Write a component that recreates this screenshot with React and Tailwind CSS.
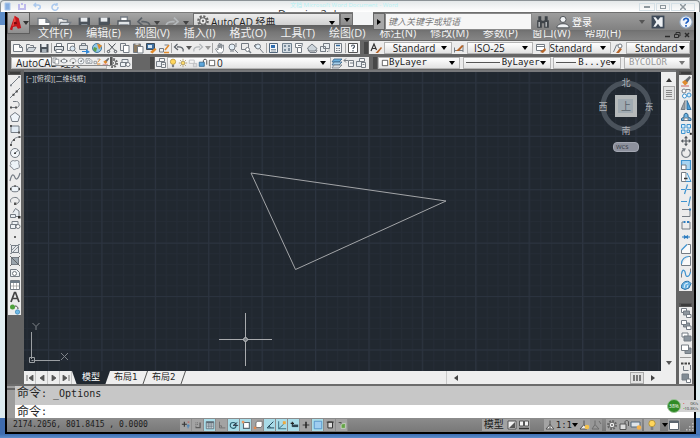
import clsx from "clsx"

const LATIN = "font-['Open_Sans','Noto_Sans_CJK_SC',sans-serif]"
const MONO = "font-['DejaVu_Sans_Mono','Noto_Sans_CJK_SC',monospace]"

const G = "#757c84"
const B = "#3f93cf"
const O = "#e08a2c"

// Every icon is drawn on a 12x12 grid
const icons = {
  // file
  new: <path d="M1.500 2.500h6l3 3v4h-9zM7.500 2.500v3h3" fill="#fdfdfd" stroke={G} />,
  open: <><path d="M1.500 9.500v-7h3l1 1h3v2" fill="#eee" stroke={G} /><path d="M1.500 9.500l2-4h7.500l-2.500 4z" fill="#cfd6dc" stroke={G} /></>,
  save: <><path d="M2 2h8.500v8.500H2z" fill="#4c535b" /><path d="M3.500 2h5v3h-5z" fill="#e8ebee" /><path d="M4 7h4.500v3.500H4z" fill="#a7b0b8" /></>,
  saveAs: <><path d="M2 2h8.500v8.500H2z" fill="#4c535b" /><path d="M3.500 2h5v3h-5z" fill="#e8ebee" /><path d="M6.500 11l4-4 1 1-4 4z" fill={O} /></>,
  print: <><path d="M3.500 1.500h5v3h-5z" fill="#fff" stroke={G} /><path d="M1.500 4.500h9v4h-9z" fill="#dfe3e6" stroke="#4f565e" /><path d="M3 7.500h6v3H3z" fill="#fff" stroke={G} /></>,
  preview: <><path d="M1.500 1.500h7v7h-7z" fill="#fafafa" stroke={G} /><circle cx="6.500" cy="6.500" r="2.500" fill="#dbe9f4" stroke={G} /><path d="M8.500 8.500l2.500 2.500" stroke={G} /></>,
  publish: <><path d="M3.500 1.500h4v2h-4zM1.500 3.500h8v4h-8z" fill="#dfe3e6" stroke={G} /><path d="M4 9h4V7l4 3-4 2v-2H4z" fill="#2f86d6" /></>,
  globe: <><circle cx="6" cy="6" r="4.500" fill="#8fc8e8" stroke="#4678a0" /><path d="M6 1.500l5 2-3 4z" fill={O} /><path d="M3 5l3 1-1 4-3-2z" fill="#5da04c" /></>,
  cut: <><path d="M2.500 1.500l6.500 7M9.500 1.500L3 8.500" stroke="#4a4f55" /><circle cx="2.500" cy="9.500" r="1.200" stroke="#4a4f55" fill="none" /><circle cx="9.500" cy="9.500" r="1.200" stroke="#4a4f55" fill="none" /></>,
  copyClip: <><path d="M1.500 1.500h5v7h-5z" fill="#eee" stroke={G} /><path d="M4.500 3.500h5.500v7H4.500z" fill="#fff" stroke={G} /></>,
  paste: <><path d="M1.500 2h7v8.500h-7z" fill="#8f7d64" stroke={G} /><path d="M3.500 1h3v2h-3z" fill="#ccc" /><path d="M5.500 4.500H11v6.500H5.500z" fill="#fff" stroke={G} /></>,
  match: <><path d="M1.500 1.500h8v6h-8z" fill="#3d6f9f" stroke="#3f4b57" /><path d="M3 3h4v3H3z" fill="#d7e6f2" /><path d="M5 10l5-4 1.500 1.500-4 4z" fill={O} /></>,
  blockEdit: <><path d="M1.500 6.500h4v3.500h-4zM6.500 3h4" fill="#eee" stroke={G} /><path d="M7 8l4-5M6 10.500h5" stroke={O} strokeWidth="1.500" /></>,
  undo: <path d="M10 9.500c1-3-1-5-6-4.500M4.500 2L1.500 5l3.500 3" fill="none" stroke="#5b6168" strokeWidth="1.300" />,
  redo: <path d="M2 9.500C1 6.500 3 4.500 8 5M7.500 2l3 3L7 8" fill="none" stroke="#b4b8bb" strokeWidth="1.300" />,
  pan: <path d="M4 11L1.500 7l1-.5L4 8V3h1v3-4.500h1V6l.5-4h1v4.500L8.500 3h1v5.500L8 11z" fill="#fff" stroke={G} strokeWidth=".8" />,
  zoomRt: <><circle cx="5" cy="5" r="3" fill="#e3eef6" stroke={G} /><path d="M7.500 7.500L11 11M9 1v4M7 9h-4" stroke={G} /></>,
  zoomWin: <><path d="M1.500 1.500h7v6h-7z" fill="none" stroke={G} /><circle cx="7.500" cy="7.500" r="2" fill="#fff" stroke={G} /><path d="M9 9l2 2" stroke={G} strokeWidth="1.500" /></>,
  zoomPrev: <><circle cx="5" cy="4.500" r="2.500" fill="#e3eef6" stroke={G} /><path d="M7 7l3.500 4M1 4l2-2M1 4l2 1.500" stroke={G} /></>,
  props: <><path d="M1.500 1.500h8v9h-8z" fill="#f4f6f8" stroke="#52677c" /><path d="M3 3h4v3H3z" fill="#2f6db0" /><path d="M3 7.500h5M3 9h5" stroke="#8a99a6" /></>,
  design: <><path d="M1.500 1.500h9v9h-9z" fill="#d5dde4" stroke="#71818f" /><path d="M3 3h2v2H3zM7 3h2v2H7zM3 7h2v2H3zM7 6h2v3H7z" fill="#7d8f9f" /></>,
  palette: <path d="M2.500 1.500h7l-1 4v5h-4v-5h-2zM5 3.500h3M5 5.500h3" fill="#fff" stroke={G} />,
  sheet: <><path d="M1.500 6L6 2l5 4.500L9 9H3z" fill="#cdd5db" stroke={G} /><path d="M2 8l2 2.500h6L11 8" fill="none" stroke={G} /></>,
  markup: <><path d="M4.500 1.500h6v5h-6zM1.500 4.500h5v5h-5z" fill="#e9edf0" stroke={G} /><path d="M4 9.500h6v-4" fill="none" stroke={G} strokeDasharray="1 1" /></>,
  calc: <><path d="M2.500 1.500h7v9h-7z" fill="#f4f4f4" stroke={G} /><path d="M4 3.500h4" stroke="#30689c" strokeWidth="1.500" /><path d="M4 6.500h4M4 8.500h4" stroke={G} strokeDasharray="1 .5" /></>,
  help: <><path d="M1.500 1.500h9v9h-9z" fill="#fff" stroke="#555" /><path d="M4.500 4.500c0-2 3-2 3 0 0 1-1.500 1-1.500 2.500M6 8v1.500" fill="none" stroke="#444f5e" strokeWidth="1.200" /></>,
  textStyle: <><path d="M1 9L4 2l2.500 6M2 6.500h3.500" fill="none" stroke="#333" strokeWidth="1.200" /><path d="M5.500 11L11 5l1 1-4 5z" fill="#b5652a" /></>,
  dimStyle: <><path d="M1 8.500h9M1.500 5.500v5M10 3v7" stroke={G} fill="none" /><path d="M3 9l6-6 1.500 1L6 9z" fill="#b5652a" /></>,
  tableStyle: <><path d="M1.500 2.500h8v6h-8zM1.500 4.500h8" fill="#fff" stroke={G} /><path d="M5 10l5-4 1 2-3 3z" fill="#b5652a" /></>,
  leaderStyle: <><path d="M1.500 10l3-7h4l1 2" fill="none" stroke={G} /><circle cx="8" cy="4" r="2" fill="#fff" stroke={G} /><path d="M4 11l4-5 2 1-3 4z" fill="#b5652a" /></>,
  // layers
  layers: <><path d="M1.500 4.500h5v5h-5z" fill="#e8ecef" stroke={G} /><path d="M4.500 1.500h5v3h-5zM6.500 5.500h4v5h-4zM7.500 7.500h2" fill="#f6f6f6" stroke={G} /></>,
  bulb: <><circle cx="6" cy="4.500" r="3.200" fill="#ffd65c" stroke="#a98a35" strokeWidth=".8" /><path d="M4.700 8h2.600v3H4.700z" fill="#7c7f84" /></>,
  sun: <><circle cx="6" cy="6" r="2.200" fill="#ffdc6b" stroke="#9a8240" strokeWidth=".8" /><path d="M6 1v2M6 9v2M1 6h2M9 6h2M2.500 2.500L4 4M8 8l1.500 1.500M9.500 2.500L8 4M4 8L2.500 9.500" stroke="#9a8240" strokeWidth=".8" /></>,
  vpFreeze: <><path d="M1.500 2.500h6v4h-6z" fill="none" stroke="#b9bcbf" /><path d="M6.500 6.500h4v4h-4z" fill="#ddd" stroke="#b9bcbf" /></>,
  lock: <><path d="M1.500 5h6v5h-6z" fill="#5da7dc" stroke="#34688f" /><path d="M6.500 5V3c0-2 4-2 4 0v5" fill="none" stroke="#555" strokeWidth="1.200" /></>,
  swatch: <path d="M2 2h8v8H2z" fill="#fff" stroke="#222" />,
  makeCurrent: <><path d="M3 2h8l-3 3H1z" fill="#6cb0dd" stroke="#3a668a" strokeWidth=".8" /><path d="M3 5h8l-3 3H1z" fill="#a6d0ec" stroke="#3a668a" strokeWidth=".8" /><path d="M3 8h8l-3 3H1z" fill="#d9dde0" stroke={G} strokeWidth=".8" /></>,
  layerPrev: <><path d="M5.500 3.500h5v6h-5z" fill="#f6f6f6" stroke={G} /><path d="M1 3.500h4M3 1.500L1 3.500l2 2M7 6h3" stroke={G} fill="none" /></>,
  // draw
  line: <><path d="M2 10L10 2" stroke={G} /><path d="M1 9.500h1.800v1.800H1zM9.300 1h1.800v1.800H9.300z" fill={G} /></>,
  xline: <><path d="M1 11L11 1" stroke={G} /><path d="M3.500 6.800h2v2h-2zM6.700 3.500h2v2h-2z" fill="#444" /></>,
  pline: <><path d="M4 2.500h3.500c3.500 0 3.500 6 0 6H2" fill="none" stroke={G} /><path d="M1 7.500h2v2H1zM6 7.500h2v2H6z" fill="#555" /></>,
  polygon: <path d="M6 1.500l4.700 3.500L9 10.500H3L1.300 5z" fill="#eef4f9" stroke={G} />,
  rect: <><path d="M2 3h8v6.500H2z" fill="#e1ebf4" stroke={G} /><path d="M1 2h2v2H1zM9 8.500h2v2H9z" fill="#555" /></>,
  arc: <><path d="M2 10C2.500 5 6 2.500 10 2" fill="none" stroke={G} /><path d="M1 9h2v2H1zM4 4h2v2H4zM9.500 1h2v2h-2z" fill="#555" /></>,
  circle: <><circle cx="6" cy="6" r="4.500" fill="#f2f6f9" stroke={G} /><path d="M6 6l3-2.500" stroke={G} /><path d="M5 5.500h2v1.500H5z" fill="#444" /></>,
  cloud: <path d="M3 2c1.500-1 2 0 3 0 1.500-1 4-.5 4 1 0 1-.5 1.500 0 2.500 1 2 0 4.500-2 4-1 0-2 1.500-3.500 1C3.500 10 4 9 3 8.500 1 8 .5 6.500 2 5.500 1 4 1.500 2.500 3 2z" fill="#edf3f8" stroke={G} strokeWidth=".9" />,
  spline: <path d="M1 10C3 1 5 4 6 6.500S9 9 11 2" fill="none" stroke={G} strokeWidth="1.200" />,
  ellipse: <><ellipse cx="6" cy="6" rx="4.300" ry="2.800" fill="#eef4f9" stroke={G} /><path d="M1 5h1.500v2H1zM9.500 5H11v2H9.500zM5.300 2.300h1.500v1.500H5.300z" fill="#444" /></>,
  ellArc: <><path d="M2 7.500C0 4 4 2 7 2.500s5 4.500 1 6" fill="none" stroke={G} /><path d="M5 7.500h2.500V10H5z" fill="#555" /></>,
  insert: <><path d="M1.500 7.500h5v3h-5zM4 5.500L6.500 1.500 10 4v5.500H6.500" fill="#e9eef2" stroke={G} /><path d="M9 9h2.500v2.500H9z" fill="#333" /></>,
  block: <><path d="M3 2.500h6v3H3zM1.500 5.500h5v4h-5z" fill="#eef2f5" stroke={G} /><circle cx="9" cy="7.500" r="2" fill="#fff" stroke={G} /></>,
  point: <path d="M5 5h2v2H5z" fill="#666" />,
  hatch: <><path d="M2.500 2.500h7v7h-7z" fill="#e3e6e9" stroke={G} /><path d="M1 1l2 2M9 9l2 2M3 7l4-4M4 9l5-5M1 10.500h2M9 1.500h2" stroke={G} strokeWidth=".8" /></>,
  gradient: <><path d="M2.500 2.500h7v7h-7z" fill="#9aa4ac" stroke={G} /><path d="M1 1l10 10M1 11l2-2M9 3l2-2" stroke="#555" strokeWidth=".8" /></>,
  region: <><path d="M1.500 2.500h6l3 3v4h-9z" fill="#eef2f5" stroke={G} /><circle cx="5.500" cy="6.500" r="2" fill="#fff" stroke={G} /></>,
  table: <><path d="M1.500 1.500h9v9h-9z" fill="#fff" stroke={G} /><path d="M1.500 2h9v2h-9z" fill="#6f7c88" /><path d="M4.500 4v6M7.500 4v6M2 7h8" stroke="#999" strokeWidth=".7" /></>,
  text: <path d="M2 11L5.500 1.500h1L10 11M3.500 7.500h5" fill="none" stroke="#444" strokeWidth="1.700" />,
  addSel: <><circle cx="3.500" cy="4" r="2.500" fill="#4fa13c" /><path d="M6 3c2 0 3 1 3 3" fill="none" stroke="#444" /><circle cx="8.500" cy="9" r="2.200" fill="#6fb9e6" stroke="#3a86b8" strokeWidth=".7" /></>,
  // modify
  erase: <><path d="M4 6l5.500-5L11 2.500 7 8z" fill="#6b6f73" /><path d="M2 7l3-2 3 3-3 2.500z" fill={O} /><path d="M1 11h8" stroke="#c66" /></>,
  copy: <><circle cx="4" cy="4" r="2" fill="#fff" stroke={G} /><circle cx="4.500" cy="9" r="2" fill="#fff" stroke={B} /><circle cx="9" cy="8" r="2" fill="#d7ecf9" stroke={B} /><path d="M6 2.500h4v2" fill="none" stroke={G} /></>,
  mirror: <><path d="M5 1.500v9H1z" fill="#9aa1a7" stroke={G} /><path d="M7 1.500v9h4z" fill="#4da0da" stroke="#2f6f9f" /></>,
  offset: <><path d="M1.500 9.500V7.500L4 6V3.500L6 2l2 1.500V6l3 1.500v2z" fill="#6db4e3" stroke="#30648c" /><path d="M4 9.500h4V7H4z" fill="#fff" stroke={G} /></>,
  array: <><path d="M1.500 1.500h3.500v3.500H1.500zM7 1.500h3.500v3.500H7zM1.500 7H5v3.500H1.500z" fill="#d7ecf9" stroke={B} /><path d="M7 7h2.500v2.500H7z" fill="#d7ecf9" stroke={B} /><path d="M9.800 9.800h2v2h-2z" fill="#222" /></>,
  move: <path d="M6 .8l2 2.400H6.600v2.200h2.200V4l2.400 2-2.400 2V6.600H6.600v2.200H8l-2 2.400-2-2.400h1.400V6.600H3.200V8L.8 6l2.400-2v1.400h2.200V3.200H4z" fill="#555b61" />,
  rotate: <><path d="M8.500 2.500A4.300 4.300 0 1 1 3.500 2.500" fill="none" stroke={G} strokeWidth="1.200" /><path d="M2 1l4 .5L4 5z" fill={G} /></>,
  scale: <><path d="M1.500 1.500h9v9h-9z" fill="#a8d4f1" stroke={B} strokeWidth="1.200" /><path d="M1.500 6h4.500v4.500H1.500z" fill="#fff" stroke={G} /></>,
  stretch: <><path d="M1.500 1.500H6v9H1.500z" fill="#fff" stroke={G} /><path d="M7 2l4 8.500H6" fill="#d7ecf9" stroke={B} /><path d="M4 7.500h3.500" stroke="#333" strokeWidth="1.500" /></>,
  trim: <path d="M1 6.500h4M7 6.500h4M7.500 1.500L4.500 11" stroke={B} strokeWidth="1.200" />,
  extend: <path d="M1 6.500h6M10.500 1.500L8.500 11" stroke={B} strokeWidth="1.200" />,
  breakAt: <><path d="M2 2.500h8M2 9.500h8" stroke={G} fill="none" /><path d="M10 3v6.500" stroke={G} /><path d="M9 1.500h2v2H9z" fill="#2c7cc0" /></>,
  break: <><path d="M3.500 3H2v7h8V3H8.500" fill="none" stroke={G} /><path d="M3.500 2h2v2h-2zM7 2h2v2H7z" fill="#2c7cc0" /></>,
  join: <path d="M2 6h8M4 4.500L6 6 4 7.500M8 4.500L6 6l2 1.500" stroke="#2c7cc0" fill="none" strokeWidth="1.200" />,
  chamfer: <><path d="M1.500 7v3.500h9v-9H7.500" fill="#fafafa" stroke={G} /><path d="M1.500 7L7 1.500" stroke={B} strokeWidth="1.200" /></>,
  fillet: <><path d="M1.500 9v1.500h9v-9H9" fill="#fafafa" stroke={G} /><path d="M1.500 9C1.500 4 5 1.500 9 1.500" fill="none" stroke={B} strokeWidth="1.200" /></>,
  blend: <><path d="M1.500 10.500V7M10.500 5V1.500" stroke={G} /><path d="M1.500 7c1-6 3.500-4 4 0s4 3 5-2" fill="none" stroke={B} strokeWidth="1.200" /></>,
  explode: <><path d="M1.500 9C1 4 5 1.500 9 2.500l2 2-2 4.500-4 1.500z" fill="#69b2e2" stroke="#2f74a8" /><path d="M4 9l1-4 3-1M7 9l1-3" stroke="#dff0fb" fill="none" /></>,
  orderBack: <><path d="M1.500 1.500h5v4h-5z" fill="#fff" stroke={G} /><path d="M3.500 4h6v4h-6z" fill="#8f979e" stroke={G} /><path d="M6.500 7.500h4.500v3H6.500z" fill="#fff" stroke={G} /></>,
  orderFront: <><path d="M3.500 4h6v4h-6z" fill="#8f979e" stroke={G} /><path d="M1.500 1.500h5v4h-5zM6.500 7h4.500v3.500H6.500z" fill="#fff" stroke={G} /></>,
  orderAbove: <><path d="M2 2h6v4H2z" fill="#fff" stroke={G} /><path d="M4 5h7v5H4z" fill="#8a949d" stroke={G} /></>,
  orderUnder: <><path d="M5 5h6v5.500H5z" fill="#8a949d" stroke={G} /><path d="M1.500 2h7v5.500h-7z" fill="#fff" stroke={G} /></>,
  orderText: <><path d="M1 3.500h2.500M4.500 3.500H7M8 3.500h2" stroke="#444" strokeWidth="2" /><path d="M3.500 6v4.500h5M10.500 5v5" stroke={G} fill="none" /></>,
  orderHatch: <><path d="M2 2h6.500v6H2z" fill="#818b94" stroke={G} /><path d="M6.500 7h4v3.500h-4z" fill="#fff" stroke={G} /></>,
  // status
  infer: <><path d="M1 5h6M4 2v6" stroke="#333" strokeWidth="1.300" /><path d="M7 7h3.500M8.500 5v5" stroke="#3a80c0" /><path d="M8 2.500h2" stroke="#c44" /></>,
  snap: <><path d="M3 9h5.500V3" fill="none" stroke="#5b5b5b" strokeWidth="1.500" /><path d="M3 3h1v1H3zM5 3h1v1H5zM3 5h1v1H3zM5 5h1v1H5zM3 7h1v1H3z" fill="#5b5b5b" /></>,
  grid: <><path d="M1.500 2h9v8.500h-9z" fill="#dfe9ee" stroke="#5d6b75" /><path d="M1.500 2h9v2h-9z" fill="#5d6b75" /><path d="M4 3v7M6 3v7M8 3v7M2 6h8M2 8h8" stroke="#5d6b75" strokeWidth=".7" /></>,
  ortho: <path d="M3 2v7.500h7M3 7h2.500v2" fill="none" stroke="#6b6b6b" />,
  polar: <><circle cx="5" cy="6.500" r="3.500" fill="none" stroke="#2b5f70" strokeWidth="1.300" /><path d="M5 6.500L10 3M5 6.500h6" stroke="#223" /></>,
  osnap: <><path d="M3 3h7v7H3z" fill="#fff" stroke="#5b6a73" strokeWidth="1.300" /><path d="M1 1h3v3H1z" fill="#e69a63" /></>,
  osnap3d: <><path d="M3.500 3.500L5 1.500h6V7L9.500 9h-6z" fill="#fff" stroke="#666" /><path d="M1 8h3v3H1z" fill="#e28a50" /></>,
  otrack: <path d="M10 2L2.500 9.500H11M5 7l1.500 2" fill="none" stroke="#24485a" strokeWidth="1.200" />,
  ducs: <><path d="M2 1.500v9h9M2 10.500L8 5" fill="none" stroke="#2b5f70" /><path d="M7 1.500h3.500v3.500H7z" fill="#efa93c" /></>,
  dyn: <><path d="M2 4h4M4 2v6" stroke="#222" strokeWidth="1.300" /><path d="M4 5.500h7v3H4z" fill="#2d4450" /></>,
  lwt: <><path d="M2 6h8" stroke="#222" strokeWidth="1" /><path d="M6 2v8" stroke="#222" strokeWidth="1.800" /></>,
  tpy: <path d="M1.500 1.500h9v9h-9z" fill="#9fcdf0" stroke="#4e8fc6" />,
  qp: <path d="M3.500 2.500h5.500v7H3.500zM2 2.500h8.500" fill="#ddd" stroke="#333" strokeWidth="1.200" />,
  cycle: <><path d="M2 3h3v3" fill="none" stroke="#444" /><path d="M5 5l5-1v6H5z" fill="#62a445" stroke="#e9f0e4" strokeWidth=".7" /></>,
  qvLayout: <><path d="M2 2h8v8H2z" fill="#f2f2f2" stroke="#555" /><path d="M3 9l6-6v6z" fill="#555" /></>,
  qvDraw: <><path d="M1.500 2h4v5h-4zM6.500 2h4v5h-4z" fill="#f2f2f2" stroke="#555" /><path d="M1 9.500h10" stroke="#333" strokeWidth="1.500" /></>,
  anno: <path d="M6 1.500v4L2 10h8L6 5.500M6 5v5" fill="#eee" stroke="#555" />,
  annoVis: <><path d="M6 1.500v4L2 10h7L6 5.500" fill="#eee" stroke="#555" /><circle cx="9" cy="8" r="2.300" fill="#f4c24c" /></>,
  annoOff: <path d="M5 1.500v4L2 10h7L5 5.500M9 2l2 3" fill="none" stroke="#6d6d6d" />,
  gear: <><circle cx="6" cy="6" r="4" fill="none" stroke="#666" strokeWidth="2" strokeDasharray="1.800 1.300" /><circle cx="6" cy="6" r="2.800" fill="#eee" stroke="#666" /><circle cx="6" cy="6" r="1" fill="#666" /></>,
  lockUi: <><path d="M2 5h6v5.500H2z" fill="#ddd" stroke="#555" /><path d="M7 5V3c0-2 3.500-2 3.500 0v4" fill="none" stroke="#555" /></>,
  hw: <><path d="M1 3h9v5H1z" fill="#dfe5ea" stroke="#55697a" /><circle cx="9" cy="8.500" r="2.300" fill="#f4b24c" /></>,
  clean: <><path d="M1.500 2h9v8.500h-9z" fill="#fff" stroke="#5c6670" /><path d="M1.500 2h9v2h-9z" fill="#5c6670" /></>,
  // search bar
  find: <><path d="M2 1h2.500v3.500H2zM7.500 1H10v3.500H7.500zM1 4.500h4V11H1zM7 4.500h4V11H7zM5 5h2v2H5z" fill="#3e4348" /><path d="M2.200 6h1v4h-1zM8.200 6h1v4h-1z" fill="#d5d8db" /></>,
  user: <><circle cx="6" cy="3.800" r="2.600" fill="#f1f3f5" stroke="#4a4f54" strokeWidth=".8" /><path d="M.8 11c0-3 3-3.500 5.200-3.500s5.200.5 5.200 3.500z" fill="#f1f3f5" stroke="#4a4f54" strokeWidth=".8" /></>,
  exchange: <><path d="M.5.5h11v11H.5z" fill="#3e4a58" /><path d="M2 2h2l2 2.500L8 2h2v8H8L6 7.500 4 10H2l2.500-4z" fill="#eef1f4" /></>,
  helpRound: <><circle cx="6" cy="6" r="5.300" fill="#f2f6fb" stroke="#8fa3ba" /><path d="M4 4.700c0-2.500 4-2.300 4 0C8 6 6 6 6 7.500M6 8.500V10" fill="none" stroke="#2161c4" strokeWidth="1.500" /></>,
}

function Icon({ name, className = "size-3" }) {
  return (
    <svg viewBox="0 0 12 12" className={clsx("shrink-0", className)} aria-hidden="true">
      {icons[name]}
    </svg>
  )
}

function Tool({ name, label = name, size = "size-3", className }) {
  return (
    <button type="button" aria-label={label} className={clsx("flex shrink-0 items-center justify-center", className)}>
      <Icon name={name} className={size} />
    </button>
  )
}

function Caret({ className = "text-black" }) {
  return (
    <svg viewBox="0 0 6 4" className={clsx("h-1 w-1.5 shrink-0", className)} aria-hidden="true">
      <path d="M0 0h6L3 4z" fill="currentColor" />
    </svg>
  )
}

function Grip() {
  return <span className="h-3 w-1 shrink-0 bg-[#484848]" />
}

function Divider() {
  return <span className="h-2.5 w-px shrink-0 bg-[#a5a5a5]" />
}

function Combo({ label, value, className, textClass = "pl-1", before, disabled }) {
  return (
    <span
      className={clsx(
        "flex h-3 shrink-0 items-center overflow-hidden border border-[#b4b4b4] bg-gradient-to-b from-white to-[#e2e2e2] pr-1",
        disabled ? "text-[#9a9a9a]" : "text-[#222]",
        className
      )}
    >
      {before}
      <select
        aria-label={label}
        disabled={disabled}
        className={clsx("h-full min-w-0 flex-1 appearance-none bg-transparent leading-none disabled:opacity-100", textClass)}
      >
        <option>{value}</option>
      </select>
      <Caret className={disabled ? "text-[#777]" : "text-black"} />
    </span>
  )
}

/* ---------- title, quick access, menu ---------- */

function DesktopTitle() {
  return (
    <header className="flex h-3 items-start justify-between overflow-hidden rounded-t border border-b-0 border-[#8b9296] bg-gradient-to-b from-[#e4e8e9] to-white pl-[3px]">
      <div className="flex w-[274px] shrink-0 gap-1.5 pt-px text-[#8fb8ec]">
        <svg viewBox="0 0 60 9" className="h-[9px] w-[60px] opacity-70" fill="none" stroke="currentColor" aria-hidden="true">
          <path d="M1 1h5v7H1z" fill="#5b92d8" />
          <path d="M15 2v5h6V2M17 2h2" stroke="#a9a3ea" strokeWidth="2" />
          <path d="M30 3h4c3 0 3 4 0 4M32 1l-2 2 2 2" strokeWidth="1.500" />
          <path d="M53 3a3 3 0 1 0 1 2M53 1v2h-2" strokeWidth="1.500" />
        </svg>
      </div>
      <div className="flex-1">
        <p className="pl-3 pt-px text-[6px] leading-[7px] text-[#b5f1f5]">文档 Microsoft Word Document - Word</p>
        <h1 className={clsx("text-[11px] leading-[10px] text-[#333]", LATIN)}>Drawing2.dwg</h1>
      </div>
      <div className="flex gap-px pr-1 pt-0.5 text-[#8d979d]">
        <button type="button" aria-label="最小化" className="flex h-2 w-4 items-center justify-center border border-[#d5e0e6]">
          <span className="h-0.5 w-1.5 border border-current" />
        </button>
        <button type="button" aria-label="还原" className="flex h-2 w-3.5 items-center justify-center border border-[#d5e0e6]">
          <span className="h-1 w-1.5 border border-current" />
        </button>
        <button type="button" aria-label="关闭" className="flex h-2 w-6 items-center justify-center border border-[#d5e0e6]">
          <svg viewBox="0 0 6 6" className="size-1.5" aria-hidden="true"><path d="M0 0l6 6M6 0L0 6" stroke="currentColor" strokeWidth="1.500" /></svg>
        </button>
      </div>
    </header>
  )
}

function QuickAccess() {
  return (
    <div className="flex h-[13px] items-start bg-[#f4f5f6]">
      <button type="button" aria-label="应用程序菜单" className="z-10 flex h-[22px] w-[23px] shrink-0 items-center gap-px border border-[#5d5d5d] bg-gradient-to-b from-[#bcbcbc] to-[#8f8f8f] pl-px">
        <svg viewBox="0 0 16 20" className="h-5 w-[15px]" aria-hidden="true">
          <path d="M1 18L7 1l5 3 3 12-4 1-2-3-4 1-1 4z" fill="#c4161c" />
          <path d="M7 1l2 10-5 3z" fill="#ef4a43" />
          <path d="M6 9l3-1 1 3-4 1z" fill="#7c0a10" />
        </svg>
        <Caret className="text-[#333]" />
      </button>
      <div className="flex h-[13px] w-[323px] shrink-0 overflow-hidden border-t border-[#7c7c7c] bg-gradient-to-b from-[#a6a6a6] to-[#8b8b8b]">
        <div className="flex items-start gap-1 pl-1.5 pt-0.5">
          <Tool name="new" size="size-4" />
          <Tool name="open" size="size-4" />
          <Tool name="save" size="size-4" />
          <Tool name="saveAs" size="size-4" />
          <Tool name="print" size="size-4" />
          <Tool name="undo" size="size-4" />
        </div>
        <div className="flex w-[41px] items-start justify-between pl-0.5 pr-1 pt-0.5">
          <span className="pt-1.5"><Caret className="text-[#444]" /></span>
          <Tool name="redo" size="size-4" />
          <span className="pt-1.5"><Caret className="text-[#444]" /></span>
        </div>
        <div className={clsx("flex h-4 w-[147px] items-start border border-[#6f6f6f] bg-gradient-to-b from-[#ededed] to-[#c9c9c9] pl-0.5 pr-1 text-[10px] text-[#222]", LATIN)}>
          <Icon name="gear" className="size-3.5" />
          <select aria-label="工作空间" className="h-4 min-w-0 flex-1 appearance-none bg-transparent pl-px leading-4">
            <option>AutoCAD 经典</option>
          </select>
          <span className="pt-[7px]"><Caret /></span>
        </div>
        <button type="button" aria-label="自定义" className="flex h-3.5 flex-1 items-center justify-center border border-[#6f6f6f]">
          <Caret />
        </button>
      </div>
      <div className="w-5 shrink-0" />
      <div className="z-10 flex h-[18px] min-w-0 flex-1 items-center border-t border-[#6f6f6f] bg-gradient-to-b from-[#9d9d9d] to-[#818181]">
        <button type="button" aria-label="展开" className="flex h-full w-3 shrink-0 items-center justify-center border border-[#666] bg-[#a8a8a8]">
          <svg viewBox="0 0 4 6" className="h-1.5 w-1" aria-hidden="true"><path d="M0 0l4 3-4 3z" /></svg>
        </button>
        <input
          aria-label="搜索"
          placeholder="键入关键字或短语"
          className={clsx("h-full w-[147px] shrink-0 border border-[#8a8a8a] bg-[#f6f6f6] pl-0.5 text-[9px] italic placeholder:text-[#777]", LATIN)}
        />
        <div className="flex flex-1 items-center gap-1.5 pl-1">
          <Tool name="find" label="搜索" size="size-3.5" />
          <button type="button" className={clsx("flex items-center gap-0.5 text-[10px] leading-none text-white", LATIN)}>
            <Icon name="user" className="size-3.5" />
            登录
          </button>
        </div>
        <div className="flex items-center pr-px">
          <Caret className="text-[#555]" />
          <Tool name="exchange" size="size-3.5" className="ml-1.5" />
          <Tool name="helpRound" label="帮助" size="size-3.5" className="ml-3.5" />
        </div>
      </div>
    </div>
  )
}

const menus = ["文件(F)", "编辑(E)", "视图(V)", "插入(I)", "格式(O)", "工具(T)", "绘图(D)", "标注(N)", "修改(M)", "参数(P)", "窗口(W)", "帮助(H)"]

function MenuBar() {
  return (
    <nav className="flex h-[15px] items-center justify-between bg-gradient-to-b from-[#5f5f5f] via-[#777] to-[#858585] pl-[31px] pr-1">
      <div className={clsx("flex gap-3.5 text-[11px] leading-[15px] text-[#f2f2f2]", LATIN)}>
        {menus.map((m) => (
          <button key={m} type="button" className="shrink-0 whitespace-nowrap">{m}</button>
        ))}
      </div>
      <svg viewBox="0 0 26 8" className="mt-1 h-2 w-[26px] shrink-0" fill="none" stroke="#2c2c2c" aria-hidden="true">
        <path d="M1 5.500h5" strokeWidth="1.500" />
        <path d="M10.500 3.500h4v3h-4zM12 3V1.500h4V5H15" />
        <path d="M21 2l4 4M25 2l-4 4" strokeWidth="1.500" />
      </svg>
    </nav>
  )
}

/* ---------- toolbars ---------- */

function StandardRow() {
  return (
    <div className="flex h-[15px] items-center bg-[#666] px-1">
      <div className="flex h-[13px] w-[349px] shrink-0 items-center justify-between bg-[#ececec] px-px">
        {["new", "open", "save"].map((n) => <Tool key={n} name={n} />)}
        <Divider />
        {["print", "preview", "publish", "globe"].map((n) => <Tool key={n} name={n} />)}
        <Divider />
        {["cut", "copyClip", "paste", "match", "blockEdit"].map((n) => <Tool key={n} name={n} />)}
        <Divider />
        <Tool name="undo" />
        <Caret className="text-[#555]" />
        <Tool name="redo" />
        <Caret className="text-[#999]" />
        <Divider />
        {["pan", "zoomRt", "zoomWin", "zoomPrev"].map((n) => <Tool key={n} name={n} />)}
        <Divider />
        {["props", "design", "palette", "sheet", "markup", "calc"].map((n) => <Tool key={n} name={n} />)}
        <Divider />
        <Tool name="help" />
      </div>
      <div className={clsx("ml-1 flex min-w-0 flex-1 items-center gap-px text-[10px]", LATIN)}>
        <Grip />
        <div className="flex h-[13px] min-w-0 flex-1 items-center justify-between bg-[#ececec] pl-px">
          <Tool name="textStyle" />
          <Combo label="文字样式" value="Standard" className="w-[68px]" textClass="pl-2" />
          <Tool name="dimStyle" />
          <Combo label="标注样式" value="ISO-25" className="w-[66px]" textClass="pl-1.5" />
          <Tool name="tableStyle" />
          <Combo label="表格样式" value="Standard" className="w-[62px]" textClass="pl-0" />
          <Tool name="leaderStyle" />
          <Combo label="多重引线样式" value="Standard" className="w-[64px]" textClass="pl-2" />
        </div>
      </div>
    </div>
  )
}

function LayerRow() {
  return (
    <div className="flex h-[15px] items-center bg-[#666] px-1">
      <div className="relative flex h-3 w-[121px] shrink-0 items-center bg-[#ececec]">
        <Combo label="工作空间" value="AutoCAD 经典" className={clsx("w-24 text-[10px]", LATIN)} />
        <Tool name="gear" />
        <Tool name="block" />
        {/* floating 3D orbit toolbar */}
        <div className="absolute -top-px left-10 flex h-2.5 w-[62px] items-center justify-between border border-[#8a8a8a] bg-[#eee]">
          {["copyClip", "ellipse", "ellArc", "circle", "region", "blockEdit", "erase"].map((n) => (
            <Tool key={n} name={n} size="size-2" />
          ))}
          <span className="h-full w-0.5 bg-[#555]" />
        </div>
      </div>
      <div className="ml-[18px] flex shrink-0 items-center gap-px">
        <Grip />
        <div className="flex h-3 w-[214px] items-center bg-[#ececec]">
          <Tool name="layers" />
          <Combo
            label="图层"
            value="0"
            className={clsx("w-[164px] text-[10px]", LATIN)}
            textClass="pl-px"
            before={
              <span className="flex shrink-0 items-center">
                <Icon name="bulb" className="size-2.5" />
                <Icon name="sun" className="size-2.5" />
                <Icon name="vpFreeze" className="size-2.5" />
                <Icon name="lock" className="size-2.5" />
                <Icon name="swatch" className="size-2" />
              </span>
            }
          />
          <Tool name="makeCurrent" />
          <Tool name="layerPrev" />
          <Tool name="layers" />
        </div>
      </div>
      <div className={clsx("ml-1 flex min-w-0 flex-1 items-center gap-px text-[9px]", MONO)}>
        <Grip />
        <div className="flex h-3 min-w-0 flex-1 items-center justify-between bg-[#ececec]">
          <Combo label="颜色" value="ByLayer" className="w-[82px]" textClass="pl-0" before={<Icon name="swatch" className="ml-0.5 size-2" />} />
          <Combo label="线型" value="ByLayer" className="w-[88px]" textClass="pl-0.5" before={<span className="ml-0.5 h-px w-[34px] bg-[#555]" />} />
          <Combo label="线宽" value="B...ye" className="w-[68px]" textClass="pl-0.5" before={<span className="ml-0.5 h-px w-5 bg-[#555]" />} />
          <Combo label="打印样式" value="BYCOLOR" className="w-[66px]" textClass="pl-1" disabled />
        </div>
      </div>
    </div>
  )
}

const drawTools = ["line", "xline", "pline", "polygon", "rect", "arc", "circle", "cloud", "spline", "ellipse", "ellArc", "insert", "block", "point", "hatch", "gradient", "region", "table", "text", "addSel"]
const modifyTools = ["erase", "copy", "mirror", "offset", "array", "move", "rotate", "scale", "stretch", "trim", "extend", "breakAt", "break", "join", "chamfer", "fillet", "blend", "explode"]

function VerticalBar({ tools }) {
  return (
    <div className="w-[13px] bg-[#ececec]">
      <div className="flex h-1 items-center justify-center bg-[#555]">
        <span className="h-0.5 w-2.5 bg-[#3c3c3c]" />
      </div>
      <div className="flex flex-col items-center">
        {tools.map((t) => <Tool key={t} name={t} />)}
      </div>
    </div>
  )
}

/* ---------- drawing area ---------- */

function ViewCube() {
  return (
    <div className={clsx("absolute right-2 top-1 flex w-[54px] flex-col items-center", LATIN)}>
      <svg viewBox="0 0 54 60" className="h-[60px] w-[54px]" aria-hidden="true">
        <circle cx="27" cy="30" r="23" fill="none" stroke="#4a525b" strokeWidth="5" />
        <path d="M16 19h22v22H16z" fill="#b5b9ba" />
        <path d="M19 23h15v14H19z" fill="#a0aab1" />
        <g fill="#aeb3b8" fontSize="9" textAnchor="middle">
          <text x="27" y="10">北</text>
          <text x="27" y="58">南</text>
          <text x="4" y="34">西</text>
          <text x="50" y="34">东</text>
          <text x="27" y="34" fontSize="10" fill="#59636b">上</text>
        </g>
      </svg>
      <button type="button" className="mt-1.5 h-2.5 w-[26px] rounded-sm border border-[#a4a8b3] bg-[#8d919d] pl-0.5 text-left text-[6px] leading-none text-[#33373f]">
        WCS
      </button>
    </div>
  )
}

function DrawingCanvas() {
  return (
    <div className="relative min-h-[298px] min-w-0 flex-1 overflow-hidden bg-[#212830]">
      <svg className="absolute inset-0 h-full w-full" fill="none" aria-label="绘图区">
        <defs>
          <pattern id="minor" x="24" y="10" width="10.700" height="10.700" patternUnits="userSpaceOnUse">
            <path d="M.5 0v10.700M0 .5h10.700" stroke="#252c36" />
          </pattern>
          <pattern id="major" x="24" y="10.500" width="53.400" height="53.400" patternUnits="userSpaceOnUse">
            <path d="M.5 0v53.400M0 .5h53.400" stroke="#2c3440" />
          </pattern>
        </defs>
        <rect width="100%" height="100%" fill="url(#minor)" />
        <rect width="100%" height="100%" fill="url(#major)" />
        <path d="M227 101L422 129 271.500 197.500z" stroke="#a3a5a8" />
        <path d="M195 267.500h53M221.500 241v53" stroke="#a9abae" />
        <circle cx="221.500" cy="267.500" r="2" fill="#7d8287" stroke="#b5b7b9" />
      </svg>
      <svg viewBox="0 0 50 45" className="absolute bottom-1 left-1 h-[45px] w-[50px]" fill="none" stroke="#9b9fa3" aria-hidden="true">
        <path d="M3.500 10v27M6 38.500h26M1.500 35.500h5v5h-5zM3.500 38.500h2" />
        <path d="M4.500 1L8 4.500 11.500 1M8 4.500V8M33 31l7 7M40 31l-7 7" stroke="#7e8388" />
      </svg>
      <p className={clsx("relative w-fit pl-0.5 pt-[3px] text-[7px] leading-2 text-[#d6d8da]", LATIN)}>[−][俯视][二维线框]</p>
      <ViewCube />
    </div>
  )
}

function VScroll() {
  return (
    <div className="flex w-[15px] shrink-0 flex-col items-center bg-[#eeeeee] py-1.5">
      <button type="button" aria-label="向上滚动"><Caret className="rotate-180 text-[#333]" /></button>
      <span className="mt-1 flex h-3.5 w-3 flex-col justify-center gap-px border border-[#aaa] bg-[#e2e2e2] px-0.5">
        <span className="h-px bg-[#888]" />
        <span className="h-px bg-[#888]" />
        <span className="h-px bg-[#888]" />
        <span className="h-px bg-[#888]" />
      </span>
      <button type="button" aria-label="向下滚动" className="mt-auto"><Caret className="text-[#555]" /></button>
    </div>
  )
}

const navPaths = ["M1 0v6M7 0v6L3 3z", "M6 0v6L2 3z", "M2 0v6l4-3z", "M7 0v6M1 0v6l4-3z"]

function LayoutTabs() {
  return (
    <div className="flex h-[13px] items-stretch bg-[#eeeeee]">
      <div className="flex">
        {navPaths.map((d) => (
          <button key={d} type="button" aria-label="切换布局" className="flex w-3 items-center justify-center border-r border-[#c5c5c5]">
            <svg viewBox="0 0 8 6" className="h-1.5 w-2" aria-hidden="true"><path d={d} fill="#555" stroke="#555" strokeWidth=".8" /></svg>
          </button>
        ))}
      </div>
      <div className={clsx("flex text-[9px] leading-[13px] text-[#222]", MONO)}>
        <button type="button" className="w-[38px] bg-[#212830] text-white [clip-path:polygon(0_0,100%_0,88%_100%,12%_100%)]">模型</button>
        {["布局1", "布局2"].map((t) => (
          <span key={t} className="flex">
            <button type="button" className="w-8 whitespace-nowrap pl-1 text-left">{t}</button>
            <svg viewBox="0 0 6 13" className="h-[13px] w-1.5" aria-hidden="true"><path d="M5.500 0L1 13" stroke="#555" /></svg>
          </span>
        ))}
      </div>
      <div className="ml-auto flex w-[230px] items-center justify-between border-l border-[#c9c9c9] pl-1.5 pr-5">
        <button type="button" aria-label="向左滚动"><Caret className="rotate-90 text-[#444]" /></button>
        <span className="ml-auto mr-1.5 flex h-3 w-3.5 items-center justify-center gap-px border border-[#aaa] bg-[#e2e2e2]">
          <span className="h-1.5 w-0.5 bg-[#777]" />
          <span className="h-1.5 w-0.5 bg-[#777]" />
          <span className="h-1.5 w-0.5 bg-[#777]" />
        </span>
        <button type="button" aria-label="向右滚动"><Caret className="-rotate-90 text-[#444]" /></button>
      </div>
    </div>
  )
}

/* ---------- command line and status ---------- */

function CommandLine() {
  return (
    <div className={clsx("flex border-t-2 border-[#6c6c6c] text-[10px] text-[#222]", MONO)}>
      <div className="w-2 shrink-0 bg-[#9d9d9d]">
        <span className="mt-0.5 block h-0.5 bg-[#666]" />
      </div>
      <div className="min-w-0 flex-1">
        <p className="h-[19px] bg-[#c7c7c7] pl-0.5 leading-4"><span className="text-xs leading-none">命令</span>: _Options</p>
        <label className="flex h-[13px] items-center bg-white pl-0.5 leading-none">
          <span className="text-xs leading-none">命令</span>:
          <input className="h-[13px] min-w-0 flex-1 pl-1 outline-none" />
        </label>
      </div>
    </div>
  )
}

const toggles = [
  ["infer", false], ["snap", false], ["grid", true], ["ortho", false], ["polar", true], ["osnap", true], ["osnap3d", false],
  ["otrack", true], ["ducs", true], ["dyn", true], ["lwt", false], ["tpy", true], ["qp", false], ["cycle", false],
]

function StatusBar() {
  return (
    <footer className="flex h-[14px] items-center bg-gradient-to-b from-[#8c8c8c] to-[#787878] text-[#1c1c1c]">
      <span className={clsx("w-[173px] shrink-0 whitespace-pre pl-1.5 text-[8px]", MONO)}>2174.2056, 801.8415 , 0.0000</span>
      <div className="flex shrink-0">
        {toggles.map(([name, on]) => (
          <button
            key={name}
            type="button"
            aria-label={name}
            aria-pressed={on}
            className={clsx("flex h-3 w-3 items-center justify-center border-r border-[#8d8d8d]", on ? "bg-[#a9dce8]" : "bg-[#a3a3a3]")}
          >
            <Icon name={name} className="size-2.5" />
          </button>
        ))}
      </div>
      <div className={clsx("ml-auto flex shrink-0 items-center text-[9px] leading-3", MONO)}>
        <button type="button" className="w-6 bg-[#a3a3a3] text-center text-[10px]">模型</button>
        <Tool name="qvLayout" className="bg-[#a3a3a3]" />
        <Tool name="qvDraw" className="bg-[#a3a3a3]" />
        <span className="w-3.5" />
        <button type="button" className="flex items-center bg-[#a3a3a3]">
          <Icon name="anno" />
          1:1
          <Caret />
        </button>
        <Tool name="annoVis" className="bg-[#a3a3a3]" />
        <Tool name="annoOff" className="bg-[#979797]" />
        <span className="w-1" />
        <Tool name="gear" className="bg-[#a3a3a3]" />
        <Tool name="lockUi" className="bg-[#a3a3a3]" />
        <Tool name="hw" className="bg-[#a3a3a3]" />
        <Tool name="bulb" className="mx-0.5 w-4 bg-[#a9a9a9]" />
        <Caret />
        <Tool name="clean" className="bg-[#a3a3a3]" />
        <svg viewBox="0 0 8 8" className="ml-1.5 mt-1 size-2" aria-hidden="true">
          <path d="M6 0h1.500v1.500H6zM3 3h1.500v1.500H3zM6 3h1.500v1.500H6zM0 6h1.500v1.500H0zM3 6h1.500v1.500H3zM6 6h1.500v1.500H6z" fill="#bdbdbd" />
        </svg>
      </div>
    </footer>
  )
}

function SpeedWidget() {
  return (
    <div className="absolute bottom-[26px] right-0 flex h-3 w-[33px] items-center rounded-l-full bg-[#d2d2d2] text-[#333]">
      <span className="flex size-3.5 shrink-0 items-center justify-center rounded-full border border-[#9fc59a] bg-[#2f8a25] text-[5px] leading-none text-white">38%</span>
      <span className="flex flex-1 flex-col text-right text-[4px] leading-[5px]">
        <span className="flex justify-between pl-0.5 pr-1"><i className="text-[#d33]">•</i>0K/s</span>
        <span className="flex justify-between pl-0.5 pr-1"><i className="text-[#3a3]">•</i>10.8K/s</span>
      </span>
    </div>
  )
}

export default function App() {
  return (
    <div className="relative flex min-h-screen w-full flex-col overflow-hidden bg-gradient-to-b from-[#dfe7ea] via-[#e6f0f1] to-[#dbeaf0] font-['Open_Sans','Noto_Sans_CJK_SC',sans-serif]">
      <DesktopTitle />
      <div className="flex flex-1">
        <div className="flex w-[5px] shrink-0 flex-col justify-between">
          <span className="h-[13px] bg-[#5d8cc6]" />
          <span className="h-4 bg-[#3f6cae]" />
        </div>
        <div className="flex min-w-0 flex-1 flex-col border-x-2 border-b-2 border-black bg-[#646464]">
          <QuickAccess />
          <MenuBar />
          <StandardRow />
          <LayerRow />
          <div className="flex flex-1">
            <div className="w-[17px] shrink-0 pl-px pt-px">
              <VerticalBar tools={drawTools} />
            </div>
            <div className="flex min-w-0 flex-1 flex-col border-t-2 border-[#77787a]">
              <div className="flex flex-1">
                <DrawingCanvas />
                <VScroll />
              </div>
              <LayoutTabs />
            </div>
            <div className="flex shrink-0 flex-col gap-3 pl-[3px] pr-0.5 pt-px">
              <VerticalBar tools={modifyTools} />
              <div className="bg-[#ececec]">
                <VerticalBar tools={["orderBack", "orderFront", "orderAbove", "orderUnder"]} />
                <div className="mx-px my-0.5 h-px bg-[#999]" />
                <div className="flex flex-col items-center">
                  <Tool name="orderText" />
                  <Tool name="orderHatch" />
                </div>
              </div>
            </div>
          </div>
          <CommandLine />
          <StatusBar />
        </div>
        <div className="flex w-1 shrink-0 flex-col justify-end">
          <span className="h-4 bg-[#4a78b8]" />
        </div>
      </div>
      <div className="h-1 bg-gradient-to-b from-[#3c6db2] to-[#5f8fcb]" />
      <SpeedWidget />
    </div>
  )
}
